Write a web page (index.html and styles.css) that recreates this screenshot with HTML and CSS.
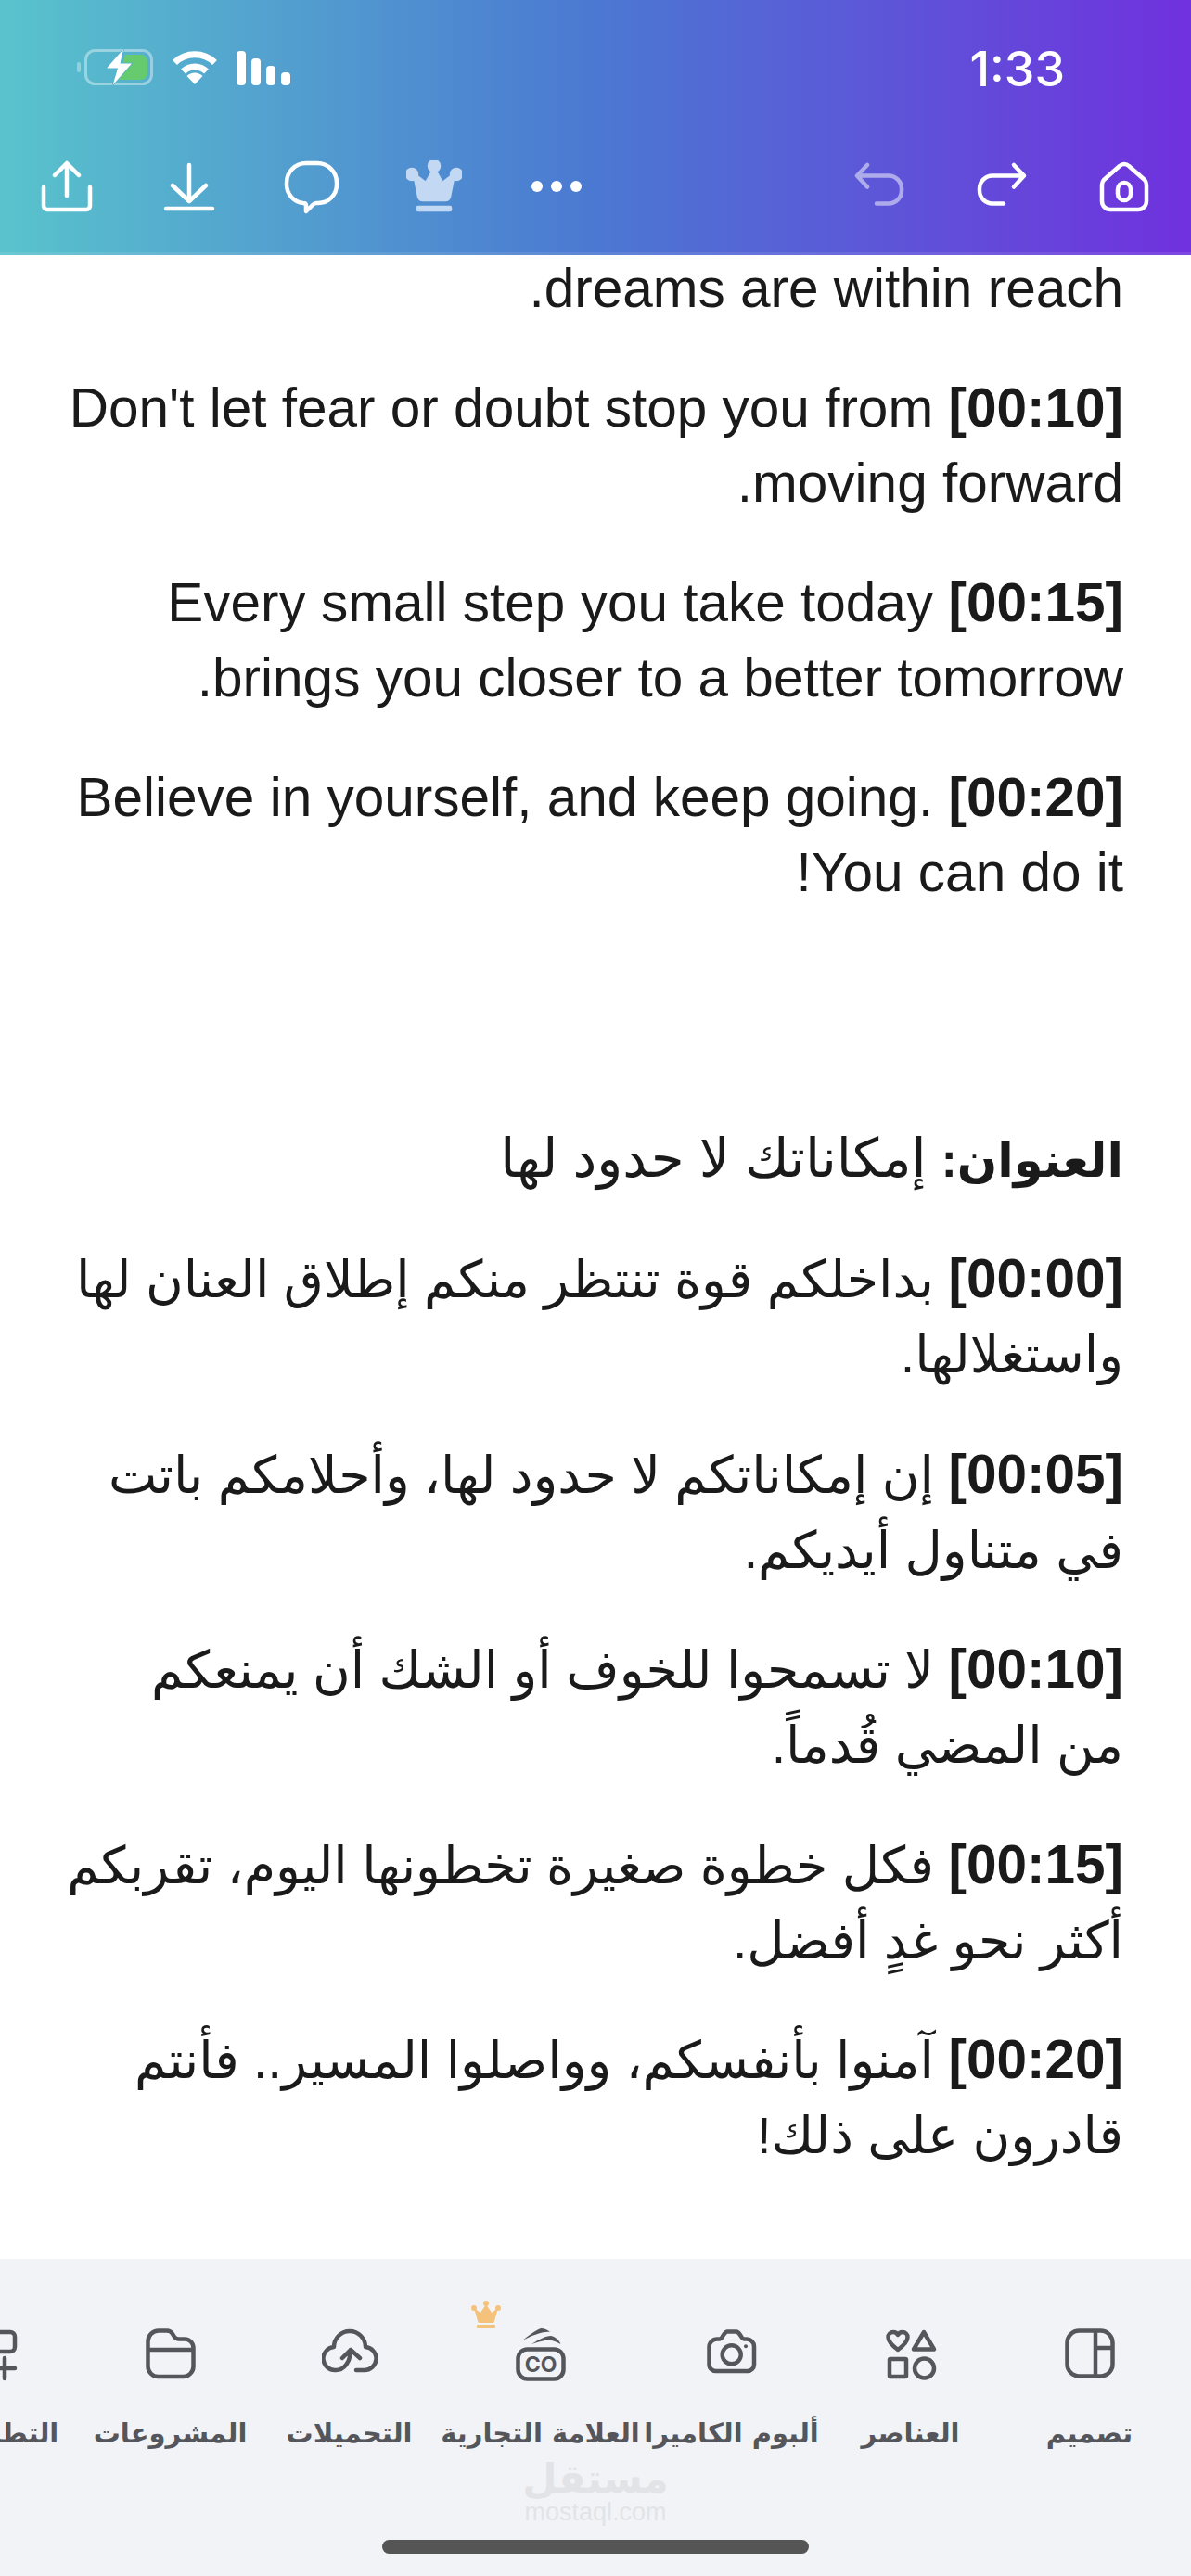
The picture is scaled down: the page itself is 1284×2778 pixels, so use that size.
FILE: index.html
```html
<!DOCTYPE html>
<html lang="ar">

<head>
    <meta charset="UTF-8">
    <meta name="viewport" content="width=device-width, initial-scale=1.0">
    <title>Canva</title>
    <link rel="stylesheet" href="styles.css">
</head>

<body>
    <div class="page">
        <!-- Barra superior -->
        <header class="topbar">
            <div class="status">
                <div class="status-icons">
                    <svg class="battery" viewBox="0 0 82 39">
                        <rect x="0" y="14" width="4" height="11" rx="2" fill="#fff" opacity=".35"/>
                        <rect x="9.500" y="1.500" width="71" height="36" rx="10" fill="none" stroke="#fff" stroke-opacity=".4" stroke-width="3"/>
                        <path d="M52 6H69a7 7 0 0 1 7 7v13a7 7 0 0 1-7 7H44z" fill="#66cb6e"/>
                        <path d="M50 0L32 20.500H44L38.500 39 59 15.500H46.500z" fill="#fff" stroke="#52b0cb" stroke-width="1.500" paint-order="stroke"/>
                    </svg>
                    <svg class="wifi" viewBox="0 0 50 37">
                        <path d="M25 37L16.500 28a12 12 0 0 1 17 0z" fill="#fff"/>
                        <path d="M12.500 23a18 18 0 0 1 25 0" fill="none" stroke="#fff" stroke-width="7"/>
                        <path d="M3.500 13.500a31 31 0 0 1 43 0" fill="none" stroke="#fff" stroke-width="7"/>
                    </svg>
                    <div class="signal">
                        <span class="bar bar-1"></span>
                        <span class="bar bar-2"></span>
                        <span class="bar bar-3"></span>
                        <span class="bar bar-4"></span>
                    </div>
                </div>
                <div class="time">1:33</div>
            </div>
            <div class="actions">
                <div class="action-group">
                    <div class="action">
                        <svg class="icon" width="56" height="56" viewBox="0 0 56 56">
                            <path d="M3 29v20a4 4 0 0 0 4 4h42a4 4 0 0 0 4-4V29M28 38V4M15 16L28 3l13 13"/>
                        </svg>
                    </div>
                    <div class="action">
                        <svg class="icon" width="56" height="56" viewBox="0 0 56 56">
                            <path d="M28 5v38M10 27l18 17 18-17M3 52h50"/>
                        </svg>
                    </div>
                    <div class="action">
                        <svg class="icon" width="60" height="60" viewBox="0 0 60 60">
                            <path d="M24 5h12a21 21 0 0 1 21 21v2a20 20 0 0 1-20 20h-2c-2 0-3 1-4 2l-7 7v-6c0-2-1-3-3-3A20 20 0 0 1 3 28v-2A21 21 0 0 1 24 5z"/>
                        </svg>
                    </div>
                    <div class="action">
                        <svg class="crown" width="60" height="56" viewBox="0 0 60 56">
                            <circle cx="30" cy="6" r="6"/>
                            <circle cx="6" cy="15" r="6"/>
                            <circle cx="54" cy="15" r="6"/>
                            <path d="M30 8l9 16 13-10-5 25a5 5 0 0 1-5 4H18a5 5 0 0 1-5-4L8 14l13 10z"/>
                            <rect x="12" y="50" width="36" height="4" rx="1"/>
                        </svg>
                    </div>
                    <div class="action">
                        <div class="dots"><span></span><span></span><span></span></div>
                    </div>
                </div>
                <div class="action-group">
                    <div class="action">
                        <svg class="icon icon-muted" width="56" height="56" viewBox="0 0 56 56">
                            <path d="M15 5L4 16.500l11 12M4 16.500H38a14 14 0 0 1 14 14v2a14 14 0 0 1-14 14H25"/>
                        </svg>
                    </div>
                    <div class="action">
                        <svg class="icon" width="56" height="56" viewBox="0 0 56 56">
                            <path d="M41 5l11 11.500-11 12M52 16.500H18a14 14 0 0 0-14 14v2a14 14 0 0 0 14 14h12"/>
                        </svg>
                    </div>
                    <div class="action">
                        <svg class="icon" width="56" height="56" viewBox="0 0 56 56">
                            <path d="M4 26a8 8 0 0 1 2-5L23 6a7 7 0 0 1 10 0l17 15a8 8 0 0 1 2 5v18a9 9 0 0 1-9 9H13a9 9 0 0 1-9-9z"/>
                            <rect x="21" y="24" width="14" height="19" rx="7"/>
                        </svg>
                    </div>
                </div>
            </div>
        </header>

        <!-- Texto -->
        <main class="doc" dir="rtl">
            <p>dreams are within reach.</p>
            <p><b>[00:10]</b> Don't let fear or doubt stop you from moving forward.</p>
            <p><b>[00:15]</b> Every small step you take today brings you closer to a better tomorrow.</p>
            <p><b>[00:20]</b> Believe in yourself, and keep going. You can do it!</p>
            <p class="title"><b>العنوان:</b> إمكاناتك لا حدود لها</p>
            <p class="ar"><b>[00:00]</b> بداخلكم قوة تنتظر منكم إطلاق العنان لها<br>واستغلالها.</p>
            <p class="ar"><b>[00:05]</b> إن إمكاناتكم لا حدود لها، وأحلامكم باتت<br>في متناول أيديكم.</p>
            <p class="ar"><b>[00:10]</b> لا تسمحوا للخوف أو الشك أن يمنعكم<br>من المضي قُدماً.</p>
            <p class="ar"><b>[00:15]</b> فكل خطوة صغيرة تخطونها اليوم، تقربكم<br>أكثر نحو غدٍ أفضل.</p>
            <p class="ar"><b>[00:20]</b> آمنوا بأنفسكم، وواصلوا المسير.. فأنتم<br>قادرون على ذلك!</p>
        </main>

        <!-- Barra inferior -->
        <footer class="dock">
            <div class="tabs" dir="rtl">
                <div class="tab">
                    <svg class="tab-icon" width="60" height="58" viewBox="0 0 60 58">
                        <g transform="translate(3 0)">
                            <rect x="2.500" y="2.500" width="49" height="49" rx="13"/>
                            <path d="M33 3v48M33 21h18"/>
                        </g>
                    </svg>
                    <span>تصميم</span>
                </div>
                <div class="tab">
                    <svg class="tab-icon" width="60" height="58" viewBox="0 0 60 58">
                        <g transform="translate(2 1)">
                            <path d="M14 22C10 19 3.500 14 3.500 8.500A5.500 5.500 0 0 1 9 3C11 3 13 4 14 6C15 4 17 3 19 3A5.500 5.500 0 0 1 24.500 8.500C24.500 14 18 19 14 22Z"/>
                            <path d="M42 3L53 21.500H31Z"/>
                            <rect x="5" y="32" width="18" height="19" rx="1"/>
                            <circle cx="42.500" cy="42" r="10.500"/>
                        </g>
                    </svg>
                    <span>العناصر</span>
                </div>
                <div class="tab">
                    <svg class="tab-icon" width="60" height="58" viewBox="0 0 60 58">
                        <g transform="translate(3 1)">
                            <path d="M11 10.500H14C17 10.500 18 3 22 2.500H32C36 3 37 10.500 40 10.500H43A8 8 0 0 1 51 18.500V38A7 7 0 0 1 44 45H9.500A7 7 0 0 1 2.500 38V19A8.500 8.500 0 0 1 11 10.500Z"/>
                            <circle cx="26.700" cy="27.300" r="10"/>
                            <circle class="solid" cx="42" cy="18.300" r="2"/>
                        </g>
                    </svg>
                    <span>ألبوم الكاميرا</span>
                </div>
                <div class="tab tab-wide">
                    <svg class="tab-crown" width="32" height="30" viewBox="0 0 32 30">
                        <circle cx="16" cy="3" r="3"/>
                        <circle cx="3" cy="8" r="3"/>
                        <circle cx="29" cy="8" r="3"/>
                        <path d="M16 4l6 9 7-5-4 14a2 2 0 0 1-2 2H9a2 2 0 0 1-2-2L3 8l7 5z"/>
                        <rect x="6" y="26" width="20" height="4" rx="1"/>
                    </svg>
                    <svg class="tab-icon" width="60" height="58" viewBox="0 0 60 58">
                        <g transform="translate(3 0)">
                            <path class="solid" d="M6.500 13.500C14 8 21 2 27 0C31 0 35 2 37 4C29 3 17 8 6.500 13.500Z"/>
                            <path class="solid" d="M17 17C25 12 32 8 38 8C43 9 47 13 48.500 17C43 14 39 12.500 35 12.500C29 13 23 15 17 17Z"/>
                            <rect x="2.500" y="22.500" width="49" height="32" rx="10"/>
                            <text class="brand-text" x="27" y="47" text-anchor="middle">CO</text>
                        </g>
                    </svg>
                    <span>العلامة التجارية</span>
                </div>
                <div class="tab">
                    <svg class="tab-icon" width="60" height="58" viewBox="0 0 60 58">
                        <path d="M31 23C31 36 24 45 15 45A12.500 12.500 0 0 1 13 20A17 17 0 0 1 47 20A12.500 12.500 0 0 1 45 45H37M22 32L31 23L41 32"/>
                    </svg>
                    <span>التحميلات</span>
                </div>
                <div class="tab">
                    <svg class="tab-icon" width="60" height="58" viewBox="0 0 60 58">
                        <g transform="translate(3 0)">
                            <path d="M2.500 14A11.500 11.500 0 0 1 14 2.500H23A7 7 0 0 1 29 6L31 9A6 6 0 0 0 36 11.500H42A9.500 9.500 0 0 1 51.500 21V41A11 11 0 0 1 40.500 52H13.500A11 11 0 0 1 2.500 41ZM2.500 23H51.500"/>
                        </g>
                    </svg>
                    <span>المشروعات</span>
                </div>
                <div class="tab">
                    <svg class="tab-icon" width="60" height="58" viewBox="0 0 60 58">
                        <g transform="translate(3 1)">
                            <rect x="3" y="3" width="21" height="21" rx="5"/>
                            <rect x="31" y="3" width="21" height="21" rx="5"/>
                            <rect x="3" y="31" width="21" height="21" rx="5"/>
                            <path d="M41 31v22M30 42h22"/>
                        </g>
                    </svg>
                    <span>التطبيقات</span>
                </div>
            </div>
            <div class="watermark">
                <div class="wm-ar">مستقل</div>
                <div class="wm-en">mostaql.com</div>
            </div>
            <div class="home-bar"></div>
        </footer>
    </div>
</body>

</html>
```
FILE: styles.css
```css
* {
    margin: 0;
    padding: 0;
    box-sizing: border-box;
}

html,
body {
    height: 100%;
}

body {
    font-family: "Liberation Sans", "DejaVu Sans", sans-serif;
    background: #fff;
    overflow: hidden;
}

.page {
    height: 2778px;
    display: flex;
    flex-direction: column;
    overflow: hidden;
}

/* Barra superior */
.topbar {
    flex: none;
    height: 275px;
    background: linear-gradient(to right, #59c3cc, #4b78d2 50%, #7031de);
    border-bottom: 3px solid rgba(255, 255, 255, 0.1);
}

.status {
    height: 145px;
    padding: 53px 136px 0 83px;
    display: flex;
    justify-content: space-between;
    align-items: flex-start;
}

.status-icons {
    display: flex;
    align-items: center;
    gap: 20px;
}

.battery {
    width: 82px;
    height: 39px;
}

.wifi {
    width: 50px;
    height: 37px;
}

.signal {
    display: flex;
    align-items: flex-end;
    gap: 6px;
    height: 38px;
}

.bar {
    width: 10px;
    background: #fff;
    border-radius: 4px;
}

.bar-1 { height: 37px; }
.bar-2 { height: 29px; }
.bar-3 { height: 21px; }
.bar-4 { height: 14px; }

.time {
    margin-top: 3px;
    font-family: Inter, sans-serif;
    font-size: 52px;
    font-weight: 500;
    line-height: 38px;
    color: #fff;
}

.actions {
    display: flex;
    justify-content: space-between;
    padding: 0 6px;
}

.action-group {
    display: flex;
}

.action {
    width: 132px;
    height: 112px;
    display: flex;
    justify-content: center;
    align-items: center;
}

.icon {
    fill: none;
    stroke: #fff;
    stroke-width: 4.500;
    stroke-linecap: round;
    stroke-linejoin: round;
}

.icon-muted {
    opacity: 0.5;
}

.crown {
    fill: #c3d8f2;
    stroke: #c3d8f2;
    stroke-width: 2.500;
    stroke-linejoin: round;
}

.dots {
    display: flex;
    gap: 9px;
}

.dots span {
    width: 12px;
    height: 12px;
    border-radius: 50%;
    background: #fff;
}

/* Texto */
.doc {
    flex: 1;
    margin-top: -5px;
    padding: 0 73px;
    overflow: hidden;
    font-size: 58.500px;
    line-height: 81px;
    color: #1a1a1a;
}

.doc p {
    margin-bottom: 48px;
}

.doc .title {
    margin-top: 227px;
    margin-bottom: 46px;
    font-size: 58px;
}

.title b {
    font-size: 51px;
}

.doc .ar {
    margin-bottom: 46.500px;
    font-size: 55.500px;
    white-space: nowrap;
}

.ar b {
    font-size: 58.500px;
}

/* Barra inferior */
.dock {
    flex: none;
    height: 342px;
    background: #f2f3f7;
    position: relative;
    overflow: hidden;
}

.tabs {
    display: flex;
    padding: 75px 13px 0 0;
    height: 303px;
}

.tab {
    flex: none;
    width: 193px;
    position: relative;
    display: flex;
    flex-direction: column;
    align-items: center;
    gap: 38px;
    color: #55565b;
    font-family: "DejaVu Sans", sans-serif;
    font-size: 29px;
    line-height: 34px;
    font-weight: 700;
    white-space: nowrap;
}

.tab-wide {
    width: 219px;
}

.tab-icon {
    flex: none;
    fill: none;
    stroke: #55565b;
    stroke-width: 4.500;
    stroke-linecap: round;
    stroke-linejoin: round;
}

.tab-icon .solid {
    fill: #55565b;
    stroke: none;
}

.brand-text {
    font-family: Inter, sans-serif;
    font-size: 23px;
    font-weight: 700;
    fill: #55565b;
    stroke: none;
}

.tab-crown {
    position: absolute;
    top: -30px;
    left: 35px;
    fill: #f4c27a;
}

.watermark {
    position: absolute;
    left: 0;
    right: 0;
    top: 215px;
    text-align: center;
    color: #e2e3e6;
}

.wm-ar {
    font-family: "DejaVu Sans", sans-serif;
    font-size: 43px;
    font-weight: 700;
    line-height: 44px;
}

.wm-en {
    font-size: 27px;
    line-height: 28px;
}

.home-bar {
    width: 460px;
    height: 15px;
    border-radius: 8px;
    background: #555;
    margin: 0 auto;
}
```
